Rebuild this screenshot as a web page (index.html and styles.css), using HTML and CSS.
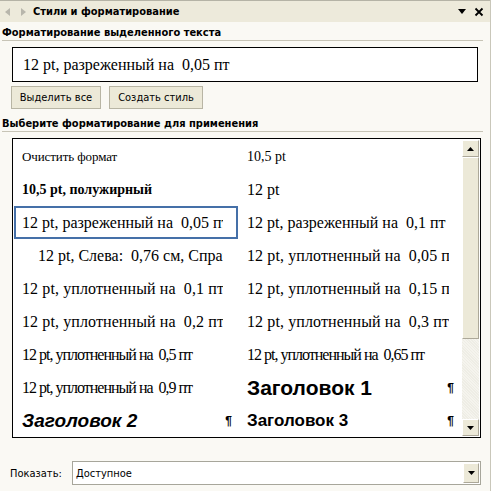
FILE: index.html
```html
<!DOCTYPE html>
<html lang="ru">
<head>
<meta charset="utf-8">
<link rel="stylesheet" href="styles.css">
</head>
<body>
<div class="pane">
  <div class="titlebar">
    <div class="nav">
      <svg width="10" height="10" viewBox="0 0 10 10"><path d="M7 1 L2 5 L7 9 Z" fill="#B8B6AC"/></svg>
      <svg width="10" height="10" viewBox="0 0 10 10"><path d="M3 1 L8 5 L3 9 Z" fill="#B8B6AC"/></svg>
    </div>
    <div class="title">Стили и форматирование</div>
    <div class="tools">
      <svg width="10" height="8" viewBox="0 0 10 8"><path d="M1 1 H9 L5 6 Z" fill="#000"/></svg>
      <svg width="10" height="10" viewBox="0 0 10 10"><path d="M1.5 1.5 L8.5 8.5 M8.5 1.5 L1.5 8.5" stroke="#000" stroke-width="1.8"/></svg>
    </div>
  </div>

  <div class="content">
    <div class="section-head">Форматирование выделенного текста</div>
    <div class="preview">12 pt, разреженный на&nbsp; 0,05 пт</div>
    <div class="buttons">
      <button class="btn b1">Выделить все</button>
      <button class="btn b2">Создать стиль</button>
    </div>
    <div class="section-head second">Выберите форматирование для применения</div>

    <div class="listbox">
      <div class="grid">
        <div class="item small"><span class="t">Очистить формат</span></div>
        <div class="item s14"><span class="t">10,5 pt</span></div>
        <div class="item bold14"><span class="t">10,5 pt, полужирный</span></div>
        <div class="item"><span class="t">12 pt</span></div>
        <div class="item selected"><span class="t">12 pt, разреженный на&nbsp; 0,05 пт</span></div>
        <div class="item"><span class="t">12 pt, разреженный на&nbsp; 0,1 пт</span></div>
        <div class="item indent"><span class="t">12 pt, Слева:&nbsp; 0,76 см, Справа</span></div>
        <div class="item up"><span class="t">12 pt, уплотненный на&nbsp; 0,05 пт</span></div>
        <div class="item up"><span class="t">12 pt, уплотненный на&nbsp; 0,1 пт</span></div>
        <div class="item up"><span class="t">12 pt, уплотненный на&nbsp; 0,15 пт</span></div>
        <div class="item up"><span class="t">12 pt, уплотненный на&nbsp; 0,2 пт</span></div>
        <div class="item up"><span class="t">12 pt, уплотненный на&nbsp; 0,3 пт</span></div>
        <div class="item cond"><span class="t">12 pt, уплотненный на&nbsp; 0,5 пт</span></div>
        <div class="item cond"><span class="t">12 pt, уплотненный на&nbsp; 0,65 пт</span></div>
        <div class="item cond"><span class="t">12 pt, уплотненный на&nbsp; 0,9 пт</span></div>
        <div class="item heading h1"><span class="t">Заголовок 1</span><span class="pil">¶</span></div>
        <div class="item heading h2"><span class="t">Заголовок 2</span><span class="pil">¶</span></div>
        <div class="item heading h3"><span class="t">Заголовок 3</span><span class="pil">¶</span></div>
      </div>
      <div class="scrollbar">
        <div class="sbtn"><svg width="7" height="4" viewBox="0 0 7 4"><path d="M0 4 L3.5 0 L7 4 Z" fill="#000"/></svg></div>
        <div class="thumb"></div>
        <div class="track"></div>
        <div class="sbtn"><svg width="7" height="4" viewBox="0 0 7 4"><path d="M0 0 L7 0 L3.5 4 Z" fill="#000"/></svg></div>
      </div>
    </div>

    <div class="show-row">
      <span class="show-label">Показать:</span>
      <div class="combo">
        <span class="combo-text">Доступное</span>
        <div class="combo-btn"><svg width="7" height="4" viewBox="0 0 7 4"><path d="M0 0 L7 0 L3.5 4 Z" fill="#000"/></svg></div>
      </div>
    </div>
  </div>
</div>
</body>
</html>
```

FILE: styles.css
```css
html, body {
  margin: 0;
  padding: 0;
  width: 491px;
  height: 491px;
  overflow: hidden;
  background: #FAF9F4;
}
.pane {
  width: 491px;
  height: 491px;
  display: flex;
  flex-direction: column;
  font-family: "DejaVu Sans Condensed", "DejaVu Sans", sans-serif;
  font-stretch: condensed;
  font-size: 11px;
  color: #000;
  box-sizing: border-box;
  border-right: 1px solid #C9C7BA;
}
.titlebar {
  height: 22px;
  flex: none;
  display: flex;
  align-items: center;
  background: #EDEADB;
  border-top: 1px solid #B5B3A6;
  box-sizing: border-box;
  padding: 0 6px 0 3px;
}
.nav {
  display: flex;
  gap: 5px;
  width: 30px;
}
.title {
  font-weight: bold;
  font-size: 11px;
  flex: 1;
}
.tools {
  display: flex;
  align-items: center;
  gap: 7px;
}
.content {
  flex: 1;
  display: flex;
  flex-direction: column;
}
.section-head {
  margin: 4px 7px 0 2px;
  font-weight: bold;
  height: 14px;
  border-bottom: 1px solid #C7C4B6;
}
.section-head.second {
  margin-top: 8px;
}
.preview {
  margin: 6px 12px 0 12px;
  height: 35px;
  box-sizing: border-box;
  border: 1px solid #000;
  background: #fff;
  font-family: "Liberation Serif", serif;
  font-stretch: normal;
  font-size: 16px;
  line-height: 33px;
  padding-left: 10px;
  white-space: nowrap;
}
.buttons {
  display: flex;
  gap: 8px;
  margin: 4px 0 0 11px;
}
.btn {
  height: 23px;
  box-sizing: border-box;
  background: #ECE9D8;
  border: 1px solid #B8B5A4;
  font-family: "DejaVu Sans Condensed", "DejaVu Sans", sans-serif;
  font-stretch: condensed;
  font-size: 11px;
  color: #000;
  padding: 0;
}
.b1 { width: 90px; }
.b2 { width: 94px; }
.listbox {
  margin: 6px 9px 0 12px;
  height: 300px;
  box-sizing: border-box;
  border: 1px solid #000;
  background: #fff;
  display: flex;
  padding: 1px;
}
.grid {
  flex: 1;
  display: grid;
  grid-template-columns: 224px 220px;
  column-gap: 2px;
  grid-auto-rows: 33px;
}
.item {
  font-family: "Liberation Serif", serif;
  font-stretch: normal;
  font-size: 16px;
  white-space: nowrap;
  overflow: hidden;
  display: flex;
  align-items: center;
  padding: 0 15px 0 8px;
  box-sizing: border-box;
}
.item:nth-child(even) {
  padding-left: 7px;
  padding-right: 11px;
}
.t {
  flex: 1;
  min-width: 0;
  overflow: hidden;
}
.item.small {
  font-size: 13px;
  letter-spacing: -0.1px;
}
.item.s14 {
  font-size: 14px;
}
.item.bold14 {
  font-size: 14px;
  font-weight: bold;
}
.item.selected {
  border: 2px solid #4570A8;
  padding-left: 6px;
  padding-right: 13px;
}
.item.indent {
  padding-left: 24px;
}
.item.up {
  letter-spacing: 0.1px;
}
.item.cond {
  letter-spacing: -1px;
}
.item.heading {
  font-family: "Liberation Sans", sans-serif;
  font-weight: bold;
  padding-right: 6px;
}
.h1 { font-size: 21px; }
.h2 { font-size: 19px; font-style: italic; }
.h3 { font-size: 17px; }
.pil {
  font-size: 12px;
  font-style: normal;
  font-weight: bold;
  color: #000;
}
.scrollbar {
  width: 17px;
  flex: none;
  display: flex;
  flex-direction: column;
  background: #F4F3EC;
}
.sbtn {
  height: 17px;
  flex: none;
  box-sizing: border-box;
  background: #ECE9D8;
  border: 1px solid #fff;
  border-right-color: #ACA899;
  border-bottom-color: #ACA899;
  display: flex;
  align-items: center;
  justify-content: center;
}
.thumb {
  height: 182px;
  flex: none;
  box-sizing: border-box;
  background: #ECE9D8;
  border: 1px solid #fff;
  border-right-color: #ACA899;
  border-bottom-color: #ACA899;
}
.track {
  flex: 1;
  background-color: #F5F4EE;
  background-image: repeating-linear-gradient(45deg, #EEEDE5 0 1px, transparent 1px 2px);
}
.show-row {
  margin: 23px 9px 0 10px;
  display: flex;
  align-items: center;
  height: 24px;
}
.show-label {
  width: 62px;
}
.combo {
  flex: 1;
  height: 24px;
  box-sizing: border-box;
  border: 1px solid #A7A69B;
  background: #fff;
  display: flex;
  align-items: center;
  padding-left: 3px;
}
.combo-text {
  flex: 1;
}
.combo-btn {
  width: 16px;
  height: 20px;
  margin-right: 1px;
  background: #ECE9D8;
  border: 1px solid #fff;
  border-right-color: #ACA899;
  border-bottom-color: #ACA899;
  box-sizing: border-box;
  display: flex;
  align-items: center;
  justify-content: center;
}
```
